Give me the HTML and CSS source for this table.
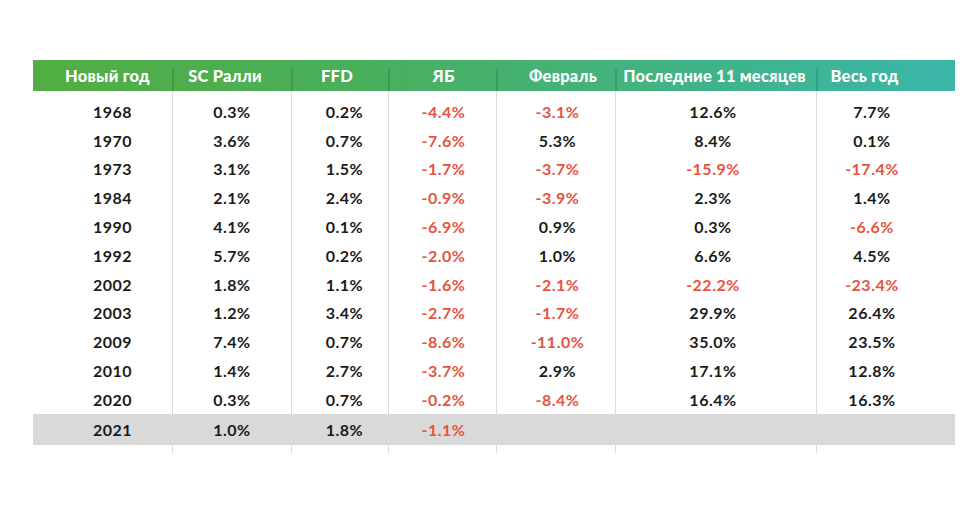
FILE: index.html
```html
<!DOCTYPE html>
<html lang="ru">
<head>
<meta charset="utf-8">
<title>Таблица</title>
<link rel="stylesheet" href="styles.css">
</head>
<body>
<div class="table">
  <div class="row head">
    <div class="cell c1">Новый год</div>
    <div class="cell c2">SC Ралли</div>
    <div class="cell c3">FFD</div>
    <div class="cell c4">ЯБ</div>
    <div class="cell c5">Февраль</div>
    <div class="cell c6">Последние 11 месяцев</div>
    <div class="cell c7">Весь год</div>
  </div>
  <div class="body">
    <div class="row spacer top"><div class="cell c1"></div><div class="cell c2"></div><div class="cell c3"></div><div class="cell c4"></div><div class="cell c5"></div><div class="cell c6"></div><div class="cell c7"></div></div>
    <div class="row"><div class="cell c1">1968</div><div class="cell c2">0.3%</div><div class="cell c3">0.2%</div><div class="cell c4 neg">-4.4%</div><div class="cell c5 neg">-3.1%</div><div class="cell c6">12.6%</div><div class="cell c7">7.7%</div></div>
    <div class="row"><div class="cell c1">1970</div><div class="cell c2">3.6%</div><div class="cell c3">0.7%</div><div class="cell c4 neg">-7.6%</div><div class="cell c5">5.3%</div><div class="cell c6">8.4%</div><div class="cell c7">0.1%</div></div>
    <div class="row"><div class="cell c1">1973</div><div class="cell c2">3.1%</div><div class="cell c3">1.5%</div><div class="cell c4 neg">-1.7%</div><div class="cell c5 neg">-3.7%</div><div class="cell c6 neg">-15.9%</div><div class="cell c7 neg">-17.4%</div></div>
    <div class="row"><div class="cell c1">1984</div><div class="cell c2">2.1%</div><div class="cell c3">2.4%</div><div class="cell c4 neg">-0.9%</div><div class="cell c5 neg">-3.9%</div><div class="cell c6">2.3%</div><div class="cell c7">1.4%</div></div>
    <div class="row"><div class="cell c1">1990</div><div class="cell c2">4.1%</div><div class="cell c3">0.1%</div><div class="cell c4 neg">-6.9%</div><div class="cell c5">0.9%</div><div class="cell c6">0.3%</div><div class="cell c7 neg">-6.6%</div></div>
    <div class="row"><div class="cell c1">1992</div><div class="cell c2">5.7%</div><div class="cell c3">0.2%</div><div class="cell c4 neg">-2.0%</div><div class="cell c5">1.0%</div><div class="cell c6">6.6%</div><div class="cell c7">4.5%</div></div>
    <div class="row"><div class="cell c1">2002</div><div class="cell c2">1.8%</div><div class="cell c3">1.1%</div><div class="cell c4 neg">-1.6%</div><div class="cell c5 neg">-2.1%</div><div class="cell c6 neg">-22.2%</div><div class="cell c7 neg">-23.4%</div></div>
    <div class="row"><div class="cell c1">2003</div><div class="cell c2">1.2%</div><div class="cell c3">3.4%</div><div class="cell c4 neg">-2.7%</div><div class="cell c5 neg">-1.7%</div><div class="cell c6">29.9%</div><div class="cell c7">26.4%</div></div>
    <div class="row"><div class="cell c1">2009</div><div class="cell c2">7.4%</div><div class="cell c3">0.7%</div><div class="cell c4 neg">-8.6%</div><div class="cell c5 neg">-11.0%</div><div class="cell c6">35.0%</div><div class="cell c7">23.5%</div></div>
    <div class="row"><div class="cell c1">2010</div><div class="cell c2">1.4%</div><div class="cell c3">2.7%</div><div class="cell c4 neg">-3.7%</div><div class="cell c5">2.9%</div><div class="cell c6">17.1%</div><div class="cell c7">12.8%</div></div>
    <div class="row"><div class="cell c1">2020</div><div class="cell c2">0.3%</div><div class="cell c3">0.7%</div><div class="cell c4 neg">-0.2%</div><div class="cell c5 neg">-8.4%</div><div class="cell c6">16.4%</div><div class="cell c7">16.3%</div></div>
    <div class="row current"><div class="cell c1">2021</div><div class="cell c2">1.0%</div><div class="cell c3">1.8%</div><div class="cell c4 neg">-1.1%</div><div class="cell c5"></div><div class="cell c6"></div><div class="cell c7"></div></div>
    <div class="row spacer bottom"><div class="cell c1"></div><div class="cell c2"></div><div class="cell c3"></div><div class="cell c4"></div><div class="cell c5"></div><div class="cell c6"></div><div class="cell c7"></div></div>
  </div>
</div>
</body>
</html>
```

FILE: styles.css
```css
html, body {
  margin: 0;
  padding: 0;
  background: #ffffff;
}

body {
  font-family: Lato, "Noto Sans", sans-serif;
  color: #1b1b1b;
}

.table {
  width: 922px;
  margin: 60px 0 0 33px;
}

.row {
  display: grid;
  grid-template-columns: 139px 119px 97px 108px 119px 201px 139px;
  height: 28.8px;
  align-items: stretch;
}

.cell {
  display: flex;
  align-items: center;
  justify-content: center;
  font-size: 16px;
  font-weight: 700;
  letter-spacing: 0.5px;
  white-space: nowrap;
}

.body .cell + .cell {
  border-left: 1.5px solid #dcdcdc;
}

.body .c1 { padding-left: 20px; }
.body .c3 { padding-left: 9px; }
.body .c4 { padding-left: 2px; }
.body .c5 { padding-left: 3px; }
.body .c6 { padding-right: 6px; }
.body .c7 { padding-right: 28px; }

.neg {
  color: #e8533e;
}

.head {
  height: 31px;
  background: linear-gradient(90deg, #52ad42 0%, #4aaf5c 35%, #44b279 60%, #3bb5a9 100%);
}

.head .cell {
  position: relative;
  color: #ffffff;
  font-size: 16.5px;
  font-weight: 900;
  letter-spacing: 0.2px;
}

.head .cell + .cell::before {
  content: "";
  position: absolute;
  left: 0;
  top: 9px;
  bottom: 0;
  width: 1.5px;
  background: rgba(0, 0, 0, 0.12);
}

.head .c1 { padding-left: 10px; }
.head .c2 { padding-right: 13px; }
.head .c3 { padding-right: 5px; }
.head .c4 { padding-left: 3px; }
.head .c5 { padding-left: 15px; }
.head .c6 { padding-right: 2px; }
.head .c7 { padding-right: 42px; }

.spacer.top {
  height: 6px;
}

.spacer.bottom {
  height: 8px;
}

.row.current {
  height: 31px;
  background: #d9d9d9;
}
```
